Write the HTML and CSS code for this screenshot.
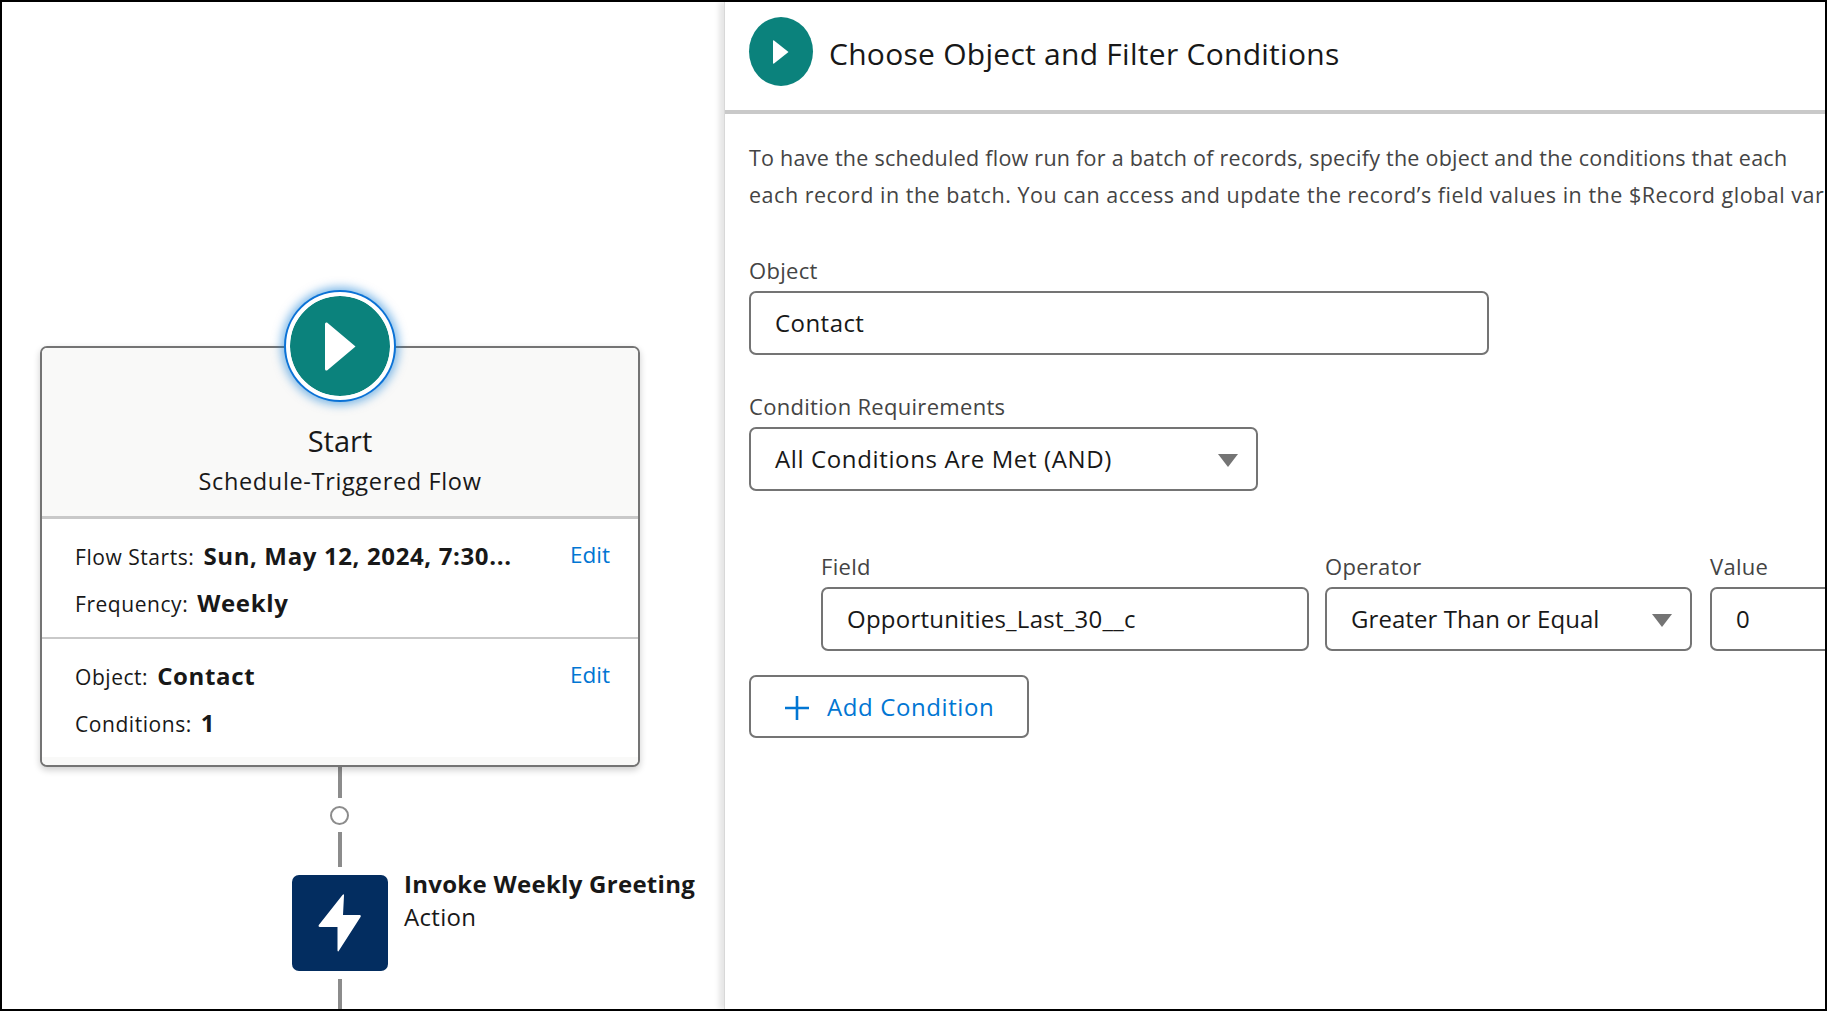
FILE: index.html
```html
<!DOCTYPE html>
<html lang="en">
<head>
<meta charset="utf-8">
<title>Choose Object and Filter Conditions</title>
<link rel="stylesheet" href="styles.css">
</head>
<body>
<div class="frame">
  <section class="canvas">
    <div class="start-card">
      <div class="start-badge">
        <svg class="start-play" viewBox="0 0 31 49"><path d="M2 0.5 L30.5 24.5 L2 48.5 Q0 49 0 47 L0 2 Q0 0 2 0.5 Z" fill="#fff"/></svg>
      </div>
      <header class="card-head">
        <div class="card-title">Start</div>
        <div class="card-sub">Schedule-Triggered Flow</div>
      </header>
      <div class="card-section sec-a">
        <a class="edit">Edit</a>
        <div class="row row-first"><span class="key">Flow Starts:</span><b class="val">Sun, May 12, 2024, 7:30...</b></div>
        <div class="row"><span class="key">Frequency:</span><b class="val">Weekly</b></div>
      </div>
      <div class="card-section sec-b">
        <a class="edit">Edit</a>
        <div class="row row-first"><span class="key">Object:</span><b class="val">Contact</b></div>
        <div class="row"><span class="key">Conditions:</span><b class="val">1</b></div>
      </div>
      <div class="card-foot"></div>
    </div>
    <div class="conn conn-1"></div>
    <div class="conn-dot"></div>
    <div class="conn conn-2"></div>
    <div class="action">
      <div class="action-icon">
        <svg viewBox="0 0 44 58" class="bolt"><path d="M24.5 1 L0.8 31 Q0 33 2 33 L19.5 33 L19.5 56.5 Q20 58.5 21 56.5 L42.5 23 Q43.5 21 41.5 21 L25 21 L26 1.5 Q26 -0.5 24.5 1 Z" fill="#fff"/></svg>
      </div>
      <div class="action-text">
        <div class="action-name">Invoke Weekly Greeting</div>
        <div class="action-type">Action</div>
      </div>
    </div>
    <div class="conn conn-3"></div>
  </section>
  <section class="panel">
    <header class="panel-head">
      <div class="head-icon">
        <svg viewBox="0 0 16 24" class="head-play"><path d="M1 0.5 L15.5 12 L1 23.5 Q0 24 0 23 L0 1 Q0 0 1 0.5 Z" fill="#fff"/></svg>
      </div>
      <h1 class="panel-title">Choose Object and Filter Conditions</h1>
    </header>
    <div class="panel-body">
      <p class="desc">To have the scheduled flow run for a batch of records, specify the object and the conditions that each</p>
      <p class="desc desc-long">each record in the batch. You can access and update the record’s field values in the $Record global variable.</p>
      <label class="lbl lbl-object">Object</label>
      <div class="box box-object">Contact</div>
      <label class="lbl lbl-req">Condition Requirements</label>
      <div class="box box-req">All Conditions Are Met (AND)<span class="arrow"></span></div>
      <div class="cond">
        <div class="cond-col col-field"><label class="lbl">Field</label><div class="box">Opportunities_Last_30__c</div></div>
        <div class="cond-col col-op"><label class="lbl">Operator</label><div class="box">Greater Than or Equal<span class="arrow"></span></div></div>
        <div class="cond-col col-val"><label class="lbl">Value</label><div class="box">0</div></div>
      </div>
      <button class="add-btn">
        <svg viewBox="0 0 24 24" class="plus"><path d="M12 0 V24 M0 12 H24" stroke="#0176d3" stroke-width="2.6" fill="none"/></svg>
        <span>Add Condition</span>
      </button>
    </div>
  </section>
</div>
</body>
</html>
```

FILE: styles.css
```css
* { box-sizing: border-box; }
html, body { margin: 0; padding: 0; height: 100%; background: #fff; }
body { font-family: "Open Sans", "Noto Sans", sans-serif; color: #181818; overflow: hidden; }

.frame {
  width: 1827px; height: 1011px; border: 2px solid #000;
  display: flex; overflow: hidden; background: #fff;
}

/* left flow canvas */
.canvas {
  width: 722px; flex: none; padding: 344px 0 0 38px;
  display: flex; flex-direction: column; align-items: flex-start;
}
.start-card {
  position: relative; width: 600px; height: 421px; flex: none;
  border: 2px solid #747474; border-radius: 7px; background: #fff;
  box-shadow: 0 3px 7px rgba(0,0,0,.2);
  display: flex; flex-direction: column;
}
.start-badge {
  position: absolute; left: 244px; top: -56px; width: 108px; height: 108px;
  border-radius: 50%; background: #0b827c;
  border: 4px solid #fff;
  box-shadow: 0 0 0 2px #0b72d6, 0 0 10px 5px rgba(1,118,211,.5);
  display: flex; align-items: center; justify-content: center;
  background-clip: padding-box;
}
.start-play { width: 31px; height: 49px; }
.card-head {
  height: 171px; background: #f9f9f8; border-bottom: 3px solid #c9c9c9;
  border-radius: 5px 5px 0 0; text-align: center; padding-top: 72px;
}
.card-title { font-size: 29px; line-height: 41px; }
.card-sub { font-size: 23.5px; line-height: 40px; letter-spacing: .65px; }
.card-section { position: relative; padding-left: 33px; }
.sec-a { height: 120px; border-bottom: 2px solid #c9c9c9; }
.sec-b { height: 118px; }
.row { display: flex; align-items: baseline; gap: 9px; font-size: 21px; line-height: 32px; height: 47px; letter-spacing: .55px; }
.row-first { margin-top: 21px; }
.val { font-weight: 700; font-size: 24px; letter-spacing: .63px; }
.edit { position: absolute; right: 28px; top: 20px; font-size: 22.5px; line-height: 32px; color: #0176d3; }
.card-foot { flex: 1; background: #f9f9f8; border-radius: 0 0 5px 5px; }

.conn { width: 4px; background: #8c8c8c; margin-left: 298px; flex: none; }
.conn-1 { height: 31px; }
.conn-2 { height: 35px; }
.conn-3 { height: 40px; }
.conn-dot {
  width: 19px; height: 19px; margin: 8px 0 7px 290px; flex: none;
  border: 2px solid #8c8c8c; border-radius: 50%; background: #fff;
}
.action { display: flex; gap: 17px; margin: 8px 0 8px 252px; flex: none; width: 460px; }
.action-icon {
  width: 96px; height: 96px; background: #032d60; border-radius: 7px;
  display: flex; align-items: center; justify-content: center; flex: none;
}
.bolt { width: 44px; height: 58px; }
.action-text { white-space: nowrap; margin: -8px 0 0 -1px; }
.action-name { font-size: 24px; font-weight: 700; line-height: 33px; letter-spacing: .28px; }
.action-type { font-size: 24px; line-height: 33px; letter-spacing: .3px; }

/* right panel */
.panel {
  flex: 1; min-width: 0; overflow: hidden; background: #fff;
  border-left: 1px solid #d8d8d8;
  box-shadow: -5px 0 5px rgba(0,0,0,.1);
  position: relative;
}
.panel-head {
  height: 112px; border-bottom: 4px solid #c9c9c9;
  display: flex; align-items: flex-start; gap: 16px;
  padding: 15px 0 0 24px;
}
.head-icon {
  width: 64px; height: 69px; border-radius: 50%; background: #0b827c; flex: none;
  display: flex; align-items: center; justify-content: center;
}
.head-play { width: 16px; height: 24px; }
.panel-title { margin: 0; font-size: 30px; font-weight: 400; line-height: 40px; padding-top: 17px; white-space: nowrap; letter-spacing: .27px; }
.panel-body { padding: 25px 0 0 24px; position: relative; }
.desc { margin: 0; font-size: 21.5px; line-height: 37px; color: #444; white-space: nowrap; letter-spacing: .25px; }
.desc-long { letter-spacing: .52px; }
.lbl { display: block; font-size: 22px; line-height: 28px; color: #444; letter-spacing: .3px; }
.lbl-object { margin-top: 43px; }
.lbl-req { margin-top: 37px; }
.box {
  position: relative; height: 64px; margin-top: 7px;
  border: 2px solid #747474; border-radius: 7px; background: #fff;
  font-size: 24px; line-height: 60px; padding-left: 24px; white-space: nowrap; letter-spacing: .25px;
}
.box-object { width: 740px; letter-spacing: .45px; }
.box-req { width: 509px; letter-spacing: .63px; }
.arrow {
  position: absolute; right: 18px; top: 25px; width: 0; height: 0;
  border-left: 10px solid transparent; border-right: 10px solid transparent;
  border-top: 13px solid #747474;
}
.cond { display: flex; gap: 18px; margin: 61px 0 0 72px; }
.cond-col { flex: none; }
.col-field { width: 488px; margin-right: -2px; }
.col-op { width: 367px; }
.col-op .box { letter-spacing: .07px; }
.col-val { width: 300px; }
.add-btn {
  display: flex; align-items: center; gap: 18px; width: 280px; height: 63px; margin: 24px 0 0 0;
  border: 2px solid #747474; border-radius: 7px; background: #fff; padding: 0 0 0 34px;
  font-family: inherit; font-size: 24px; color: #0176d3; letter-spacing: .6px;
}
.plus { width: 24px; height: 24px; flex: none; margin-top: 2px; }
```
